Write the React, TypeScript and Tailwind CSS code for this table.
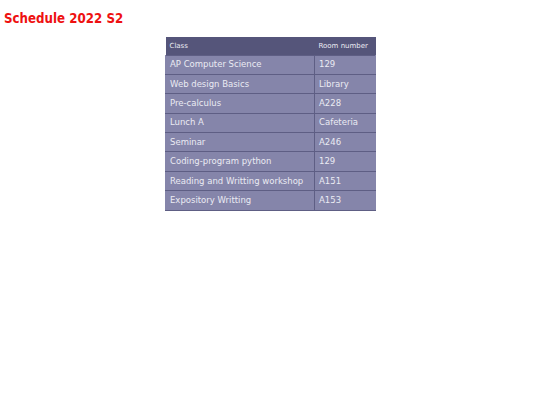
import React from "react";

const rows: [string, string][] = [
  ["AP Computer Science", "129"],
  ["Web design Basics", "Library"],
  ["Pre-calculus", "A228"],
  ["Lunch A", "Cafeteria"],
  ["Seminar", "A246"],
  ["Coding-program python", "129"],
  ["Reading and Writting workshop", "A151"],
  ["Expository Writting", "A153"],
];

export default function App() {
  return (
    <div className="w-[540px] h-[405px] bg-white">
      <h1 className="pl-[4px] pt-[10px] text-[13.2px] leading-[18px] font-bold text-[#ee1111] [font-family:'DejaVu_Sans_Condensed','DejaVu_Sans',sans-serif]">
        Schedule 2022 S2
      </h1>
      <div className="flex justify-start pl-[165px] pt-[9px]">
        <table className="table-fixed w-[210px] border-collapse [font-family:'DejaVu_Sans',Verdana,sans-serif] text-[#ebebf3]">
          <thead>
            <tr className="bg-[#55557a] h-[18px]">
              <th className="w-[149px] text-left font-normal text-[7px] pl-[4px] pt-[1px] whitespace-nowrap">Class</th>
              <th className="w-[61px] text-left font-normal text-[7px] pl-[4px] pt-[1px] whitespace-nowrap">Room number</th>
            </tr>
          </thead>
          <tbody>
            {rows.map(([c, r]) => (
              <tr key={c} className="bg-[#8585aa] h-[19.4px]">
                <td className="text-[8.5px] pl-[4px] whitespace-nowrap border border-[#5e5e84] border-l-[#8585aa]">{c}</td>
                <td className="text-[8.5px] pl-[4px] whitespace-nowrap border border-[#5e5e84] border-r-[#8585aa]">{r}</td>
              </tr>
            ))}
          </tbody>
        </table>
      </div>
    </div>
  );
}
